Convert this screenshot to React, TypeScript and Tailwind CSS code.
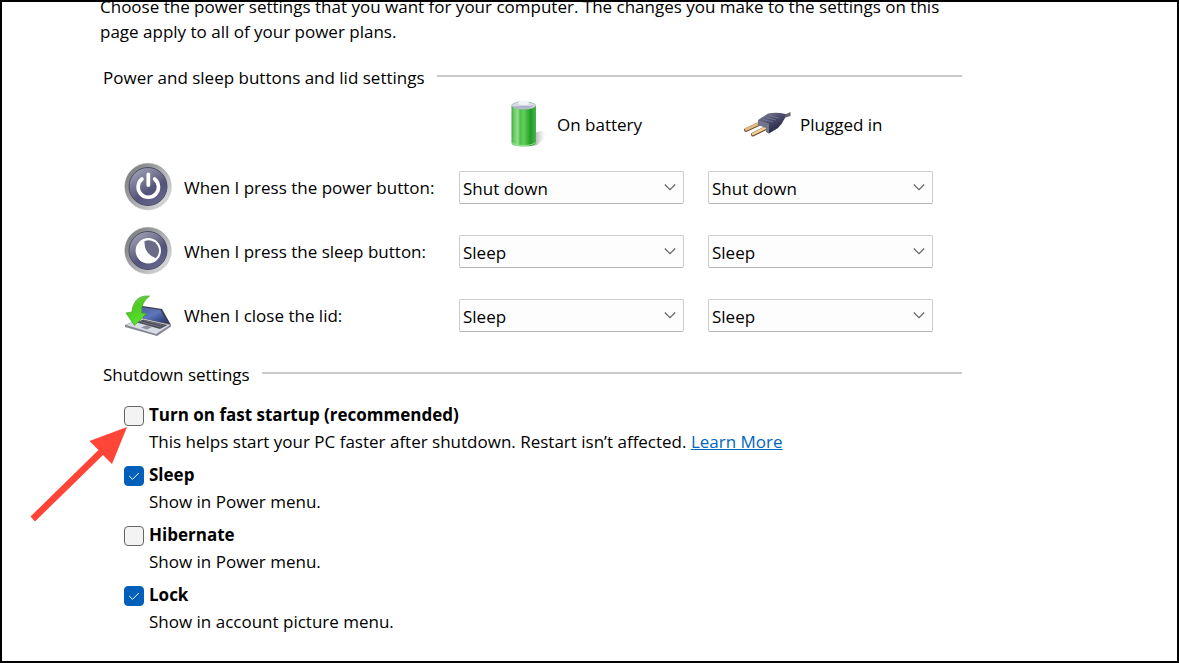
import { useState } from 'react';
import type { ReactNode } from 'react';

const ACTIONS = ['Do nothing', 'Sleep', 'Hibernate', 'Shut down'];

function BatteryIcon() {
  return (
    <svg viewBox="0 0 48 48" className="size-12 shrink-0" aria-hidden="true">
      <defs>
        <linearGradient id="battery-body">
          <stop offset="0" stopColor="#45a945" />
          <stop offset="0.12" stopColor="#6fce6c" />
          <stop offset="0.25" stopColor="#8ee088" />
          <stop offset="0.36" stopColor="#4fbf4c" />
          <stop offset="0.5" stopColor="#62cf5c" />
          <stop offset="0.78" stopColor="#1f9c25" />
          <stop offset="1" stopColor="#4db34b" />
        </linearGradient>
        <linearGradient id="battery-shadow">
          <stop offset="0.2" stopColor="#888" stopOpacity="0.6" />
          <stop offset="1" stopColor="#ccc" stopOpacity="0" />
        </linearGradient>
      </defs>
      <path d="M32 46 L36 45 Q45 38 45 33 Q42 29 34 33 Z" fill="url(#battery-shadow)" />
      <path d="M10.500 6 V43 Q11 46.500 22.500 46.500 Q34 46.500 35 43 V6 Z" fill="url(#battery-body)" />
      <path d="M11 42.500 Q14 45.500 22.500 45.500 Q31 45.500 34.500 42.500" fill="none" stroke="#a6e69c" strokeWidth="0.9" />
      <ellipse cx="22.700" cy="5.500" rx="12" ry="3.800" fill="#d9dae8" stroke="#8fae98" strokeWidth="0.6" />
      <path d="M12 6 Q18 7 22 5 Q28 7 33 5 Q30 8.800 22 8.800 Q14 8.800 12 6 Z" fill="#b0b1cc" />
      <path d="M17 3 Q18 0.500 22.500 0.500 Q27 0.500 28 3 Q27 5.500 22.500 5.500 Q18 5.500 17 3 Z" fill="#f3f3f9" />
    </svg>
  );
}

function PlugIcon() {
  return (
    <svg viewBox="0 0 48 48" className="size-12 shrink-0" aria-hidden="true">
      <defs>
        <linearGradient id="plug-body" x1="0" y1="0" x2="0.7" y2="1">
          <stop offset="0" stopColor="#8587a0" />
          <stop offset="0.5" stopColor="#4a4b6b" />
          <stop offset="1" stopColor="#1f203d" />
        </linearGradient>
      </defs>
      <path d="M15 24 L2 30" stroke="#77542f" strokeWidth="4" strokeLinecap="round" />
      <path d="M15 23.500 L2 29.500" stroke="#e2bb86" strokeWidth="2.500" strokeLinecap="round" />
      <path d="M22 28 L9 34.500" stroke="#77542f" strokeWidth="4" strokeLinecap="round" />
      <path d="M22 27.500 L9 34" stroke="#efcf9e" strokeWidth="2.500" strokeLinecap="round" />
      <path d="M39 14.500 Q43 14 46.500 12 V16 Q43 17 40 18 Z" fill="#66676c" />
      <path d="M14 20 L24 13.500 Q33 12 41.500 14 L41 18 Q38 24 34 28 L25 33.500 L23 32 V27 L14 24 Z" fill="url(#plug-body)" />
      <path d="M14 20 L25 23.500 V33.500 L22 32 V28 L14 25 Z" fill="#72748c" />
      <path d="M19 19.500 L29 22 M22 17.500 L32 20 M25 15.500 L35 18" stroke="#85879f" strokeWidth="0.6" />
    </svg>
  );
}

function RoundButton({ id, children }: { id: string; children: ReactNode }) {
  return (
    <svg viewBox="0 0 48 48" className="size-12 shrink-0" aria-hidden="true">
      <defs>
        <linearGradient id={`${id}-rim`} x1="0" y1="0" x2="1" y2="0.8">
          <stop offset="0" stopColor="#6f7073" />
          <stop offset="0.5" stopColor="#a5a6a8" />
          <stop offset="1" stopColor="#dddddf" />
        </linearGradient>
        <linearGradient id={`${id}-face`} x1="0.1" y1="0" x2="0.7" y2="1">
          <stop offset="0" stopColor="#a6a6bc" />
          <stop offset="0.45" stopColor="#6f6f8c" />
          <stop offset="0.65" stopColor="#53537a" />
          <stop offset="1" stopColor="#66668f" />
        </linearGradient>
      </defs>
      <circle cx="24" cy="23.500" r="23.300" fill={`url(#${id}-rim)`} stroke="#a5a6a8" strokeWidth="0.4" />
      <circle cx="24" cy="23.500" r="19" fill={`url(#${id}-face)`} stroke="#45455f" strokeWidth="0.9" />
      {children}
    </svg>
  );
}

function PowerIcon() {
  return (
    <RoundButton id="power">
      <path d="M18 16 A10.200 10.200 0 1 0 30.600 16" fill="none" stroke="#fff" strokeWidth="3.600" strokeLinecap="round" />
      <path d="M24.300 11.500 V22" stroke="#fff" strokeWidth="3.800" strokeLinecap="round" />
    </RoundButton>
  );
}

function SleepIcon() {
  return (
    <RoundButton id="sleep">
      <circle cx="24.300" cy="23.800" r="12.700" fill="#fff" />
      <path d="M20.500 14.300 A10.300 10.300 0 0 1 31.800 31.200 Q20 27 20.500 14.300 Z" fill="#6b6b86" />
    </RoundButton>
  );
}

function LidIcon() {
  return (
    <svg viewBox="0 0 48 48" className="size-12 shrink-0" aria-hidden="true">
      <defs>
        <linearGradient id="lid-screen" x1="0" y1="0" x2="1" y2="1">
          <stop offset="0" stopColor="#4c5a94" />
          <stop offset="0.5" stopColor="#5d76bd" />
          <stop offset="1" stopColor="#26346d" />
        </linearGradient>
        <linearGradient id="lid-arrow" x1="0" y1="0" x2="0.5" y2="1">
          <stop offset="0" stopColor="#8edb5c" />
          <stop offset="0.45" stopColor="#4fcb24" />
          <stop offset="1" stopColor="#58e52c" />
        </linearGradient>
      </defs>
      <path d="M12 14 L38 18 L47 34 L20 29 Z" fill="#3a3d50" />
      <path d="M14 15.500 L36.500 19 L43.500 31.500 L20 28 Z" fill="url(#lid-screen)" />
      <path d="M1 34 L18 27 L47 33.500 V35.500 L33 45 L1 36 Z" fill="#858892" />
      <path d="M2 34 L18 27.500 L46 34 L32 43 Z" fill="#d9dce4" />
      <path d="M13 31.500 L19 28.500 L43.500 34 L36 38 Z" fill="#4a4d59" />
      <path d="M17 31 L37 36 M20 29.500 L40 34.500" stroke="#7d808b" strokeWidth="0.7" />
      <path d="M17 36.500 L22 34.500 L28 36 L23 38.500 Z" fill="#8d909b" />
      <path
        d="M25.500 5 Q14 4 10 13 Q8 17 8 21 L2 22 L10.500 34.500 L22.500 22.500 L17.500 22 Q17 11 25.500 5 Z"
        fill="url(#lid-arrow)"
        stroke="#45a32c"
        strokeWidth="0.7"
      />
    </svg>
  );
}

function SectionTitle({ children }: { children: ReactNode }) {
  return (
    <div className="flex items-center gap-3 pl-[3px]">
      <h2 className="whitespace-nowrap">{children}</h2>
      <div className="-mt-1 h-0.5 flex-1 bg-[#cbcbcb]" />
    </div>
  );
}

function ActionSelect({ label, initial }: { label: string; initial: string }) {
  const [value, setValue] = useState(initial);

  return (
    <div className="grid items-center">
      <select
        aria-label={label}
        value={value}
        onChange={(e) => setValue(e.target.value)}
        className="col-start-1 row-start-1 h-[33px] w-full appearance-none rounded-xs border border-[#cccccc] border-b-[#b5b5b5] bg-[#fdfdfd] pl-[3px] pr-8 pt-0.5"
      >
        {ACTIONS.map((action) => (
          <option key={action}>{action}</option>
        ))}
      </select>
      <svg
        viewBox="0 0 12 8"
        className="pointer-events-none col-start-1 row-start-1 mr-2 h-2 w-3 justify-self-end"
        aria-hidden="true"
      >
        <path d="M0.800 1.500 L6 6.700 L11.200 1.500" fill="none" stroke="#666" strokeWidth="1.200" />
      </svg>
    </div>
  );
}

interface PowerRowProps {
  icon: ReactNode;
  label: string;
  initial: string;
}

function PowerRow({ icon, label, initial }: PowerRowProps) {
  return (
    <>
      <div className="flex items-center gap-3 whitespace-nowrap">
        {icon}
        <span>{label}</span>
      </div>
      <ActionSelect label={`${label} On battery`} initial={initial} />
      <ActionSelect label={`${label} Plugged in`} initial={initial} />
    </>
  );
}

interface ShutdownOptionProps {
  id: string;
  label: string;
  defaultChecked?: boolean;
  children: ReactNode;
}

function ShutdownOption({ id, label, defaultChecked = false, children }: ShutdownOptionProps) {
  return (
    <div className="grid grid-cols-[20px_1fr] gap-x-[5px] leading-[27px]">
      <div className="grid place-items-center pt-0.5">
        <input
          id={id}
          type="checkbox"
          defaultChecked={defaultChecked}
          className="peer col-start-1 row-start-1 size-5 appearance-none rounded border border-[#666666] bg-[#f3f3f3] checked:border-[#005fb8] checked:bg-[#005fb8]"
        />
        <svg
          viewBox="0 0 12 10"
          className="pointer-events-none invisible col-start-1 row-start-1 h-2.5 w-3 peer-checked:visible"
          aria-hidden="true"
        >
          <path d="M1.200 5 L4.500 8.300 L10.800 2" fill="none" stroke="#fff" strokeWidth="1" />
        </svg>
      </div>
      <label htmlFor={id} className="font-bold">
        {label}
      </label>
      <p className="col-start-2">{children}</p>
    </div>
  );
}

export default function App() {
  return (
    <main className="relative min-h-screen overflow-hidden border-2 border-black bg-white pl-[98px] pr-4 font-['Open_Sans','Noto_Sans',sans-serif] text-[17px] leading-[25px] text-black">
      <div className="max-w-[862px]">
        <p className="-mt-2">
          Choose the power settings that you want for your computer. The changes you make to the settings on this
          page apply to all of your power plans.
        </p>

        <section className="mt-[21px]">
          <SectionTitle>Power and sleep buttons and lid settings</SectionTitle>
          <div className="ml-6 mt-px grid max-w-[809px] auto-rows-[64px] grid-cols-[311px_1fr_1fr] items-center gap-x-6">
            <div className="col-start-2 flex items-center gap-2 pl-[42px] pt-0.5">
              <BatteryIcon />
              <span>On battery</span>
            </div>
            <div className="flex items-center gap-2 pl-9 pt-0.5">
              <PlugIcon />
              <span>Plugged in</span>
            </div>
            <PowerRow icon={<PowerIcon />} label="When I press the power button:" initial="Shut down" />
            <PowerRow icon={<SleepIcon />} label="When I press the sleep button:" initial="Sleep" />
            <PowerRow icon={<LidIcon />} label="When I close the lid:" initial="Sleep" />
          </div>
        </section>

        <section className="mt-[15px]">
          <SectionTitle>Shutdown settings</SectionTitle>
          <div className="ml-6 mt-3.5 flex flex-col gap-1.5">
            <ShutdownOption id="fast-startup" label="Turn on fast startup (recommended)">
              This helps start your PC faster after shutdown. Restart isn’t affected.{' '}
              <a href="#learn-more" className="text-[#0066bf] underline">
                Learn More
              </a>
            </ShutdownOption>
            <ShutdownOption id="sleep-option" label="Sleep" defaultChecked>
              Show in Power menu.
            </ShutdownOption>
            <ShutdownOption id="hibernate-option" label="Hibernate">
              Show in Power menu.
            </ShutdownOption>
            <ShutdownOption id="lock-option" label="Lock" defaultChecked>
              Show in account picture menu.
            </ShutdownOption>
          </div>
        </section>
      </div>

      {/* Pointer to the fast startup checkbox */}
      <svg viewBox="0 0 98 96" className="pointer-events-none absolute left-[28px] top-[424px] h-24 w-[98px]" aria-hidden="true">
        <path d="M97 1 L59.500 15 L68.500 24 L0.500 90.500 L5 95.500 L73 29 L82 38 Z" fill="#ff4438" />
      </svg>
    </main>
  );
}
